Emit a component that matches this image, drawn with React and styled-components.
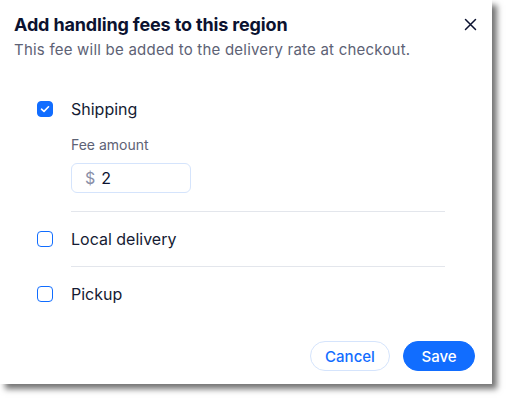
import React, { useState } from "react";
import styled, { createGlobalStyle } from "styled-components";

const GlobalStyle = createGlobalStyle`
  body {
    margin: 0;
    background: #ffffff;
    font-family: Inter, "Noto Sans", sans-serif;
  }
`;

const Page = styled.div`
  width: 508px;
  height: 400px;
  box-sizing: border-box;
  padding-bottom: 16px;
`;

const Modal = styled.div`
  width: 492px;
  height: 384px;
  box-sizing: border-box;
  background: #ffffff;
  box-shadow: 5px 5px 6px rgba(0, 0, 0, 0.55);
  display: flex;
  flex-direction: column;
`;

const Header = styled.div`
  display: flex;
  justify-content: space-between;
  align-items: flex-start;
  padding: 13px 14px 0 14px;
`;

const Title = styled.h2`
  margin: 0;
  font-size: 18px;
  line-height: 24px;
  font-weight: 700;
  letter-spacing: -0.15px;
  color: #0b1230;
`;

const Subtitle = styled.p`
  margin: 3px 0 0 0;
  font-size: 15px;
  line-height: 20px;
  letter-spacing: 0.22px;
  color: #5d6275;
`;

const CloseButton = styled.button`
  border: none;
  background: none;
  padding: 0;
  margin: 5px 1px 0 0;
  width: 13px;
  height: 13px;
  display: flex;
  cursor: pointer;
`;

const Body = styled.div`
  padding: 37px 47px 0 37px;
`;

const Option = styled.div`
  padding: ${(p) => (p.$first ? "0" : "15px 0 0 0")};
`;

const Row = styled.label`
  display: flex;
  align-items: center;
  gap: 18px;
  height: 24px;
  cursor: pointer;
`;

const Box = styled.span`
  width: 16px;
  height: 16px;
  box-sizing: border-box;
  border-radius: 4px;
  border: 1.5px solid #116dff;
  background: ${(p) => (p.$checked ? "#116dff" : "#ffffff")};
  display: flex;
  align-items: center;
  justify-content: center;
  flex-shrink: 0;
`;

const Label = styled.span`
  font-size: 16px;
  color: #151b33;
`;

const Details = styled.div`
  padding-left: 34px;
`;

const FeeLabel = styled.div`
  margin-top: 15px;
  font-size: 14px;
  line-height: 18px;
  color: #5d6275;
`;

const InputBox = styled.div`
  margin-top: 9px;
  width: 120px;
  height: 30px;
  box-sizing: border-box;
  border: 1px solid #d5e4fc;
  border-radius: 6px;
  display: flex;
  align-items: center;
  padding-left: 13px;
  gap: 6px;
  font-size: 16px;
`;

const Prefix = styled.span`
  color: #8a8fa8;
`;

const Value = styled.span`
  color: #0b1230;
`;

const Divider = styled.div`
  height: 1px;
  background: #e3e6ec;
  margin: ${(p) => p.$top || 15}px 0 0 34px;
`;

const Footer = styled.div`
  margin-top: auto;
  display: flex;
  justify-content: flex-end;
  gap: 13px;
  padding: 0 17px 13px 0;
`;

const Button = styled.button`
  height: 30px;
  box-sizing: border-box;
  border-radius: 15px;
  font-family: Inter, "Noto Sans", sans-serif;
  font-size: 15px;
  font-weight: 500;
  padding: 0;
  width: ${(p) => p.$w}px;
  border: 1px solid ${(p) => (p.$primary ? "#116dff" : "#d5e4fc")};
  background: ${(p) => (p.$primary ? "#116dff" : "#ffffff")};
  color: ${(p) => (p.$primary ? "#ffffff" : "#116dff")};
  cursor: pointer;
`;

const Check = () => (
  <svg width="10" height="8" viewBox="0 0 10 8">
    <path d="M1.5 4.2 L4 6.4 L8.5 1.8" fill="none" stroke="#fff" strokeWidth="1.6" strokeLinecap="round" strokeLinejoin="round" />
  </svg>
);

const Checkbox = ({ checked, label, onToggle }) => (
  <Row onClick={onToggle}>
    <Box $checked={checked}>{checked && <Check />}</Box>
    <Label>{label}</Label>
  </Row>
);

const App = () => {
  const [opts, setOpts] = useState({ shipping: true, local: false, pickup: false });
  const toggle = (k) => setOpts((o) => ({ ...o, [k]: !o[k] }));

  return (
    <Page>
      <GlobalStyle />
      <Modal>
        <Header>
          <div>
            <Title>Add handling fees to this region</Title>
            <Subtitle>This fee will be added to the delivery rate at checkout.</Subtitle>
          </div>
          <CloseButton aria-label="Close">
            <svg width="13" height="13" viewBox="0 0 13 13">
              <path d="M1.5 1.5 L11.5 11.5 M11.5 1.5 L1.5 11.5" stroke="#0b1230" strokeWidth="1.5" strokeLinecap="round" />
            </svg>
          </CloseButton>
        </Header>
        <Body>
          <Option $first>
            <Checkbox checked={opts.shipping} label="Shipping" onToggle={() => toggle("shipping")} />
            <Details>
              <FeeLabel>Fee amount</FeeLabel>
              <InputBox>
                <Prefix>$</Prefix>
                <Value>2</Value>
              </InputBox>
            </Details>
          </Option>
          <Divider $top={18} />
          <Option>
            <Checkbox checked={opts.local} label="Local delivery" onToggle={() => toggle("local")} />
          </Option>
          <Divider />
          <Option>
            <Checkbox checked={opts.pickup} label="Pickup" onToggle={() => toggle("pickup")} />
          </Option>
        </Body>
        <Footer>
          <Button $w={80}>Cancel</Button>
          <Button $w={72} $primary>Save</Button>
        </Footer>
      </Modal>
    </Page>
  );
};

export default App;
